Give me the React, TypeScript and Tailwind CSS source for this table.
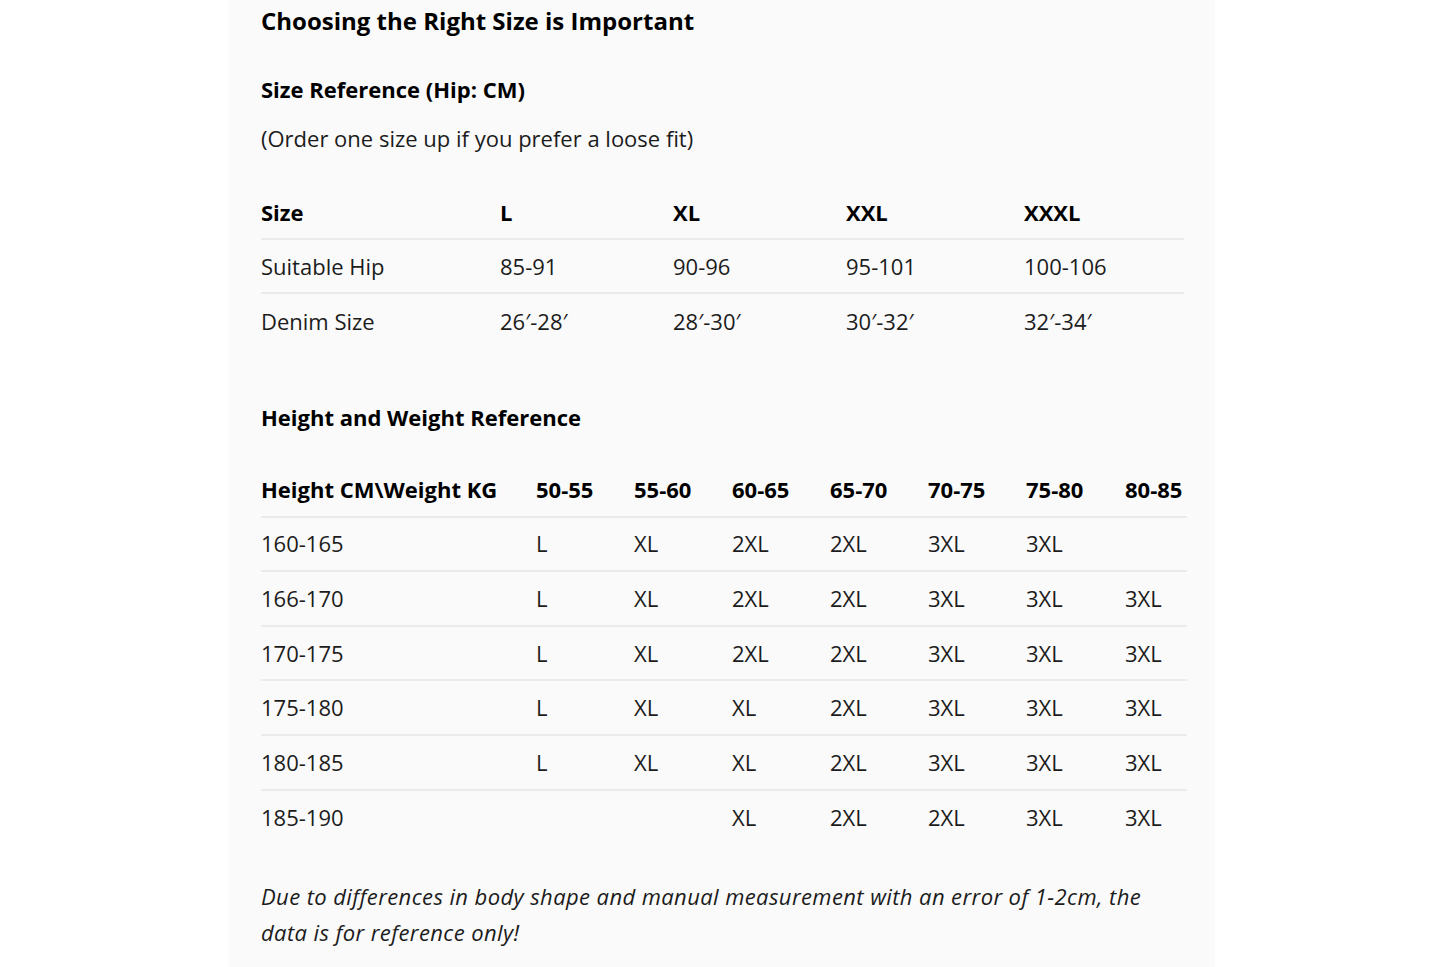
const sizeCols = ['L', 'XL', 'XXL', 'XXXL'];
const sizeRows = [
  ['Suitable Hip', '85-91', '90-96', '95-101', '100-106'],
  ['Denim Size', '26′-28′', '28′-30′', '30′-32′', '32′-34′'],
];

const weights = ['50-55', '55-60', '60-65', '65-70', '70-75', '75-80', '80-85'];
const heightRows = [
  ['160-165', 'L', 'XL', '2XL', '2XL', '3XL', '3XL', ''],
  ['166-170', 'L', 'XL', '2XL', '2XL', '3XL', '3XL', '3XL'],
  ['170-175', 'L', 'XL', '2XL', '2XL', '3XL', '3XL', '3XL'],
  ['175-180', 'L', 'XL', 'XL', '2XL', '3XL', '3XL', '3XL'],
  ['180-185', 'L', 'XL', 'XL', '2XL', '3XL', '3XL', '3XL'],
  ['185-190', '', '', 'XL', '2XL', '2XL', '3XL', '3XL'],
];

export default function App() {
  return (
    <div className="min-h-[967px] bg-white font-['Open_Sans',sans-serif] text-[#1c1c1c]">
      <div className="ml-[229px] w-[986px] min-h-[967px] bg-[#fafafa] pl-[32px]">
        <h1 className="flex h-[41px] items-center text-[24px] font-bold text-black">
          Choosing the Right Size is Important
        </h1>

        <h2 className="mt-[32px] flex h-[32px] items-center text-[22px] font-bold text-black">
          Size Reference (Hip: CM)
        </h2>
        <p className="mt-[17px] flex h-[32px] items-center text-[22px]">
          (Order one size up if you prefer a loose fit)
        </p>

        <div className="mt-[32px] w-[923px] text-[22px]">
          <div className="grid h-[54px] grid-cols-[239px_173px_173px_178px_160px] items-center border-b-2 border-[#ebebeb] font-bold text-black">
            <span>Size</span>
            {sizeCols.map((c) => (
              <span key={c}>{c}</span>
            ))}
          </div>
          {sizeRows.map((row, i) => (
            <div
              key={row[0]}
              className={`grid h-[54px] grid-cols-[239px_173px_173px_178px_160px] items-center ${
                i === 0 ? 'border-b-2 border-[#ebebeb]' : ''
              }`}
            >
              {row.map((cell, j) => (
                <span key={j}>{cell}</span>
              ))}
            </div>
          ))}
        </div>

        <h2 className="mt-[53px] flex h-[32px] items-center text-[22px] font-bold text-black">
          Height and Weight Reference
        </h2>

        <div className="mt-[30px] w-[926px] text-[22px]">
          <div className="grid h-[54.6px] grid-cols-[275px_98px_98px_98px_98px_98px_99px_62px] items-center border-b-2 border-[#ebebeb] font-bold text-black">
            <span>Height CM\Weight KG</span>
            {weights.map((w) => (
              <span key={w}>{w}</span>
            ))}
          </div>
          {heightRows.map((row, i) => (
            <div
              key={row[0]}
              className={`grid h-[54.6px] grid-cols-[275px_98px_98px_98px_98px_98px_99px_62px] items-center ${
                i < heightRows.length - 1 ? 'border-b-2 border-[#ebebeb]' : ''
              }`}
            >
              {row.map((cell, j) => (
                <span key={j}>{cell}</span>
              ))}
            </div>
          ))}
        </div>

        <p className="mt-[33px] text-[22px] italic leading-[36px] tracking-[0.4px]">
          Due to differences in body shape and manual measurement with an error of 1-2cm, the
          <br />
          data is for reference only!
        </p>
      </div>
    </div>
  );
}
